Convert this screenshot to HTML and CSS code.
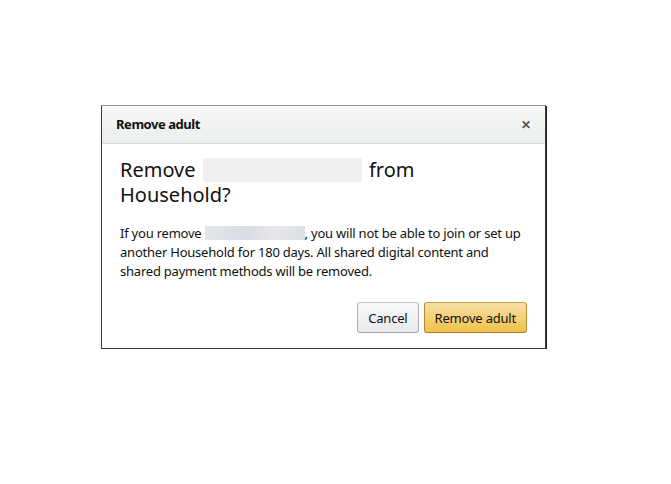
FILE: index.html
```html
<!DOCTYPE html>
<html>
<head>
<meta charset="utf-8">
<link rel="stylesheet" href="styles.css">
</head>
<body>
<div class="page">
  <div class="dialog">
    <div class="dialog-header">
      <span class="dialog-title">Remove adult</span>
      <span class="close">&#x2715;</span>
    </div>
    <div class="dialog-body">
      <h2 class="heading">Remove <span class="blur blur-name"></span> from<br>Household?</h2>
      <p class="message">If you remove <span class="blur blur-inline"></span>, you will not be able to join or set up another Household for 180 days. All shared digital content and shared payment methods will be removed.</p>
      <div class="actions">
        <button class="btn btn-cancel">Cancel</button>
        <button class="btn btn-primary">Remove adult</button>
      </div>
    </div>
  </div>
</div>
</body>
</html>
```

FILE: styles.css
```css
html, body {
  margin: 0;
  padding: 0;
  background: #ffffff;
}
body {
  font-family: "Noto Sans", "Open Sans", Arial, sans-serif;
  color: #111111;
}
.page {
  padding: 105px 0 0 101px;
}
.dialog {
  width: 443px;
  height: 242px;
  border: 1px solid #3a3a3a;
  border-top-color: #9a9a9a;
  box-shadow: 1px 1px 0 #222;
  background: #fff;
  display: flex;
  flex-direction: column;
}
.dialog-header {
  height: 36px;
  border-bottom: 1px solid #d5d9d9;
  background: linear-gradient(#f6f7f7, #eceded);
  display: flex;
  align-items: center;
  justify-content: space-between;
  padding: 0 14px 1px 14px;
}
.dialog-title {
  font-size: 13px;
  font-weight: 700;
  letter-spacing: -0.45px;
  color: #111;
}
.close {
  font-size: 12px;
  font-weight: 700;
  color: #555;
}
.dialog-body {
  padding: 13px 18px 0 18px;
  display: flex;
  flex-direction: column;
}
.heading {
  margin: 0;
  font-size: 20px;
  font-weight: 400;
  line-height: 25px;
  color: #111;
}
.blur {
  display: inline-block;
  background: #eeeeee;
}
.blur-name {
  width: 159px;
  height: 24px;
  margin: 0 2px;
  border-radius: 2px;
  background: #efefef;
  vertical-align: -5px;
}
.blur-inline {
  width: 100px;
  height: 14px;
  vertical-align: -2px;
  background: linear-gradient(90deg, #e4e6ea, #d9dce2 40%, #e6e7ea 70%, #dcdfe4);
}
.message {
  margin: 17px 0 0 0;
  max-width: 404px;
  font-size: 13px;
  line-height: 19px;
  letter-spacing: -0.22px;
  color: #111;
}
.actions {
  display: flex;
  justify-content: flex-end;
  gap: 5px;
  margin-top: 21px;
}
.btn {
  font-family: inherit;
  font-size: 13px;
  height: 31px;
  border-radius: 3px;
  padding: 0 10px;
  letter-spacing: -0.2px;
  color: #111;
  cursor: pointer;
}
.btn-cancel {
  background: linear-gradient(#f7f8fa, #e7e9ec);
  border: 1px solid #adb1b8;
  border-color: #c5c8cd #adb1b8 #a2a6ac;
}
.btn-primary {
  background: linear-gradient(#f7dfa5, #f0c14b);
  border: 1px solid #a88734;
  border-color: #c9a14a #b38b34 #9c7e31;
}
```
